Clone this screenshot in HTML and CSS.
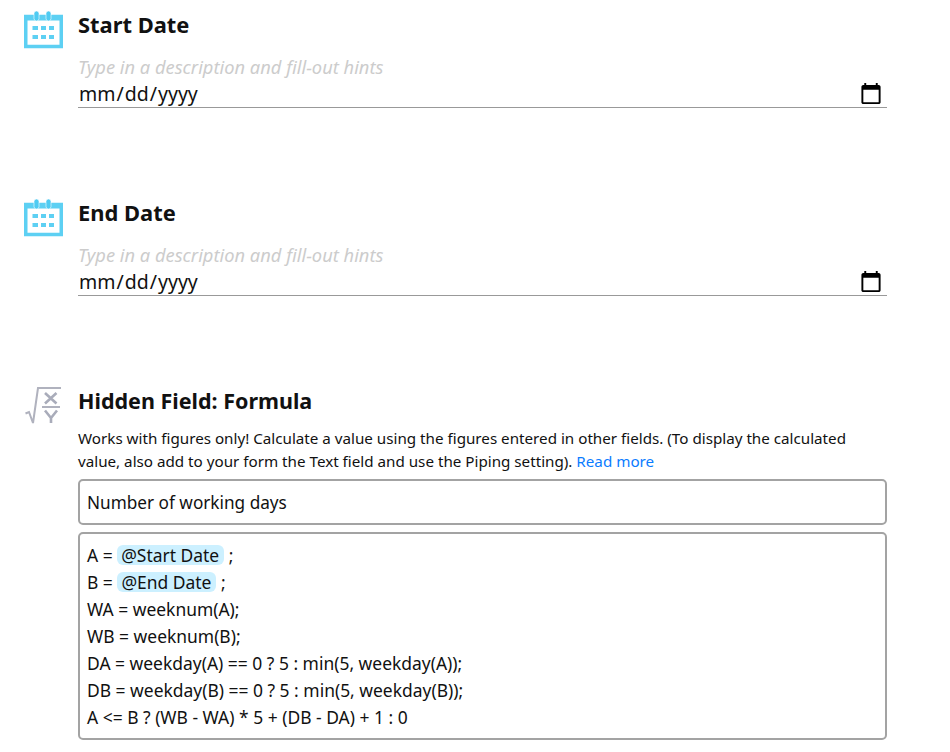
FILE: index.html
```html
<!DOCTYPE html>
<html lang="en">
<head>
<meta charset="utf-8">
<title>Form builder</title>
<link rel="stylesheet" href="styles.css">
</head>
<body>
<section class="field field-date">
  <svg class="icon" viewBox="0 0 40 38" width="40" height="38" aria-hidden="true">
    <path class="cal-frame" d="M1.750 5.500h35.500v30H1.750z"/>
    <rect class="cal-fill" x="0" y="4" width="39" height="5.500"/>
    <rect class="cal-peg" x="10" y="0" width="5" height="10" rx="2.500"/>
    <rect class="cal-peg" x="22" y="0" width="5" height="10" rx="2.500"/>
    <g class="cal-fill"><rect x="8.500" y="15" width="5.500" height="4"/><rect x="17" y="15" width="5" height="4"/><rect x="25" y="15" width="5" height="4"/><rect x="8.500" y="24" width="5.500" height="4"/><rect x="17" y="24" width="5" height="4"/><rect x="25" y="24" width="5" height="4"/></g>
  </svg>
  <div class="main">
    <h2 class="title">Start Date</h2>
    <p class="hint">Type in a description and fill-out hints</p>
    <input class="date" type="date" aria-label="Start Date">
  </div>
</section>
<section class="field field-date">
  <svg class="icon" viewBox="0 0 40 38" width="40" height="38" aria-hidden="true">
    <path class="cal-frame" d="M1.750 5.500h35.500v30H1.750z"/>
    <rect class="cal-fill" x="0" y="4" width="39" height="5.500"/>
    <rect class="cal-peg" x="10" y="0" width="5" height="10" rx="2.500"/>
    <rect class="cal-peg" x="22" y="0" width="5" height="10" rx="2.500"/>
    <g class="cal-fill"><rect x="8.500" y="15" width="5.500" height="4"/><rect x="17" y="15" width="5" height="4"/><rect x="25" y="15" width="5" height="4"/><rect x="8.500" y="24" width="5.500" height="4"/><rect x="17" y="24" width="5" height="4"/><rect x="25" y="24" width="5" height="4"/></g>
  </svg>
  <div class="main">
    <h2 class="title">End Date</h2>
    <p class="hint">Type in a description and fill-out hints</p>
    <input class="date" type="date" aria-label="End Date">
  </div>
</section>
<section class="field">
  <svg class="icon icon-formula" viewBox="0 0 38 38" width="38" height="38" aria-hidden="true">
    <path class="f-root" d="M0.500 26.500L4 25l4 11L13 1h23"/>
    <path class="f-thin" d="M17 20h18"/>
    <path class="f-x" d="M20 6l11.500 10.500M31.500 6L20 16.500M20 23.500l6 7.500 6-7.500M26 31v5"/>
  </svg>
  <div class="main">
    <h2 class="title title-long">Hidden Field: Formula</h2>
    <p class="desc">Works with figures only! Calculate a value using the figures entered in other fields. (To display the calculated value, also add to your form the Text field and use the Piping setting). <a href="#">Read more</a></p>
    <input class="text" type="text" value="Number of working days" aria-label="Field name">
    <div class="formula">
      <div>A = <span class="tag">@Start Date</span> ;</div>
      <div>B = <span class="tag">@End Date</span> ;</div>
      <div>WA = weeknum(A);</div>
      <div>WB = weeknum(B);</div>
      <div>DA = weekday(A) == 0 ? 5 : min(5, weekday(A));</div>
      <div>DB = weekday(B) == 0 ? 5 : min(5, weekday(B));</div>
      <div>A &lt;= B ? (WB - WA) * 5 + (DB - DA) + 1 : 0</div>
    </div>
  </div>
</section>
</body>
</html>
```
FILE: styles.css
```css
* { box-sizing: border-box; }
html, body { margin: 0; height: 752px; overflow: hidden; background: #fff; }
body {
  font-family: "Noto Sans", "Open Sans", sans-serif;
  color: #111;
  padding: 11px 63px 0 24px;
}
.field { display: flex; align-items: flex-start; }
.field-date { height: 188px; }
.icon { flex: none; width: 40px; height: 38px; margin-right: 14px; }
.icon-formula { margin-left: 1px; margin-right: 15px; width: 38px; }
.main { flex: 1; min-width: 0; }
.title { margin: 0; font-size: 21.900px; line-height: 28px; font-weight: 700; color: #111; }
.title-long { font-size: 21.500px; }
.hint { margin: 16px 0 0; font-size: 18.300px; line-height: 24px; font-style: italic; color: #ccc; }
.date {
  display: block; width: 100%; height: 28px; padding: 0; margin: 1px 0 0;
  border: 0; border-bottom: 1px solid #999; outline: 0; background: none;
  font: 400 19.500px/26px "Noto Sans", sans-serif; color: #111;
}
.date::-webkit-calendar-picker-indicator { width: 24px; height: 24px; padding: 0; margin: 0 4px 0 0; }
.desc { margin: 12px 0 6px; max-width: 790px; font-size: 15.200px; line-height: 23px; color: #111; }
.desc a { color: #0b7cff; text-decoration: none; }
.text, .formula {
  display: block; width: 100%;
  border: 2px solid #a3a3a3; border-radius: 5px;
  color: #111; padding: 0 7px; background: #fff;
}
.text { height: 46px; outline: 0; font: 400 17.200px/27px "Noto Sans", sans-serif; }
.formula { margin-top: 7px; height: 208px; padding: 8px 7px; font: 400 17.450px/27px "Noto Sans", sans-serif; }
.tag { display: inline-block; height: 20px; line-height: 20px; background: #ccf0ff; border-radius: 6px; padding: 0 5px 0 4px; }
.cal-frame { fill: none; stroke: #5dd0f3; stroke-width: 3.500; }
.cal-fill { fill: #5dd0f3; }
.cal-peg { fill: #4fcbf2; stroke: #fff; stroke-width: 0.600; }
.f-root { fill: none; stroke: #b0b2be; stroke-width: 2; }
.f-thin { fill: none; stroke: #b0b2be; stroke-width: 2; }
.f-x { fill: none; stroke: #a9acba; stroke-width: 2.600; }
```
